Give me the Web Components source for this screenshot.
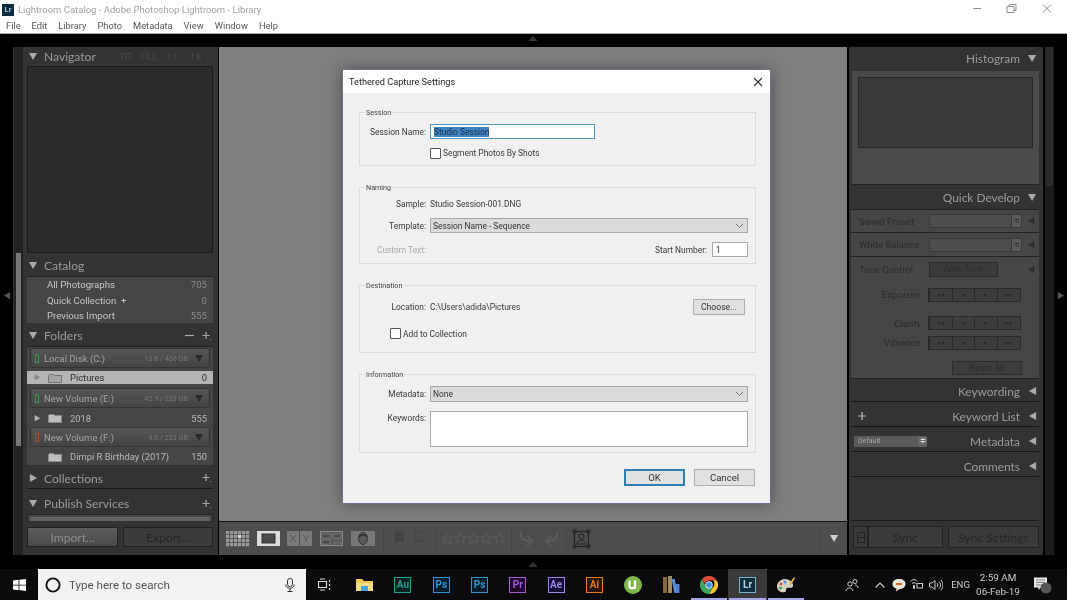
<!DOCTYPE html>
<html><head><meta charset="utf-8"><title>Lightroom</title>
<style>html,body{margin:0;padding:0;background:#000;overflow:hidden}</style></head>
<body><lr-app></lr-app>
<script>
const UI='Roboto,"Open Sans",sans-serif', PANEL='Lato,"Open Sans",sans-serif';
const tri=(d,c,s=9)=>{const p={down:'0,1 9,1 4.5,9',right:'1,0 9,4.5 1,9',left:'9,0 1,4.5 9,9'}[d];return `<svg width="${s}" height="${s}" viewBox="0 0 10 10" style="display:block;flex:none"><polygon points="${p}" fill="${c}"/></svg>`};
function def(name,css,html){customElements.define(name,class extends HTMLElement{connectedCallback(){if(this.shadowRoot)return;const a=n=>this.getAttribute(n)??'';const s=this.attachShadow({mode:'open'});s.innerHTML=`<style>${css}</style>`+(typeof html==='function'?html(a,this):html)}})}

/* ---------- window chrome ---------- */
def('win-titlebar',`:host{display:block;height:33px;background:#fff;border-bottom:1px solid #a9a9a9;box-sizing:content-box;font-family:${UI};position:relative}
.t{height:17px;display:flex;align-items:center;padding:1px 0 0 2px;gap:4px;font-size:9.5px;color:#a0a0a0}
.lr{width:12px;height:12px;background:#0f2c3d;color:#9cc8e6;font:bold 7.5px ${UI};display:flex;align-items:center;justify-content:center}
.m{display:flex;height:15px;align-items:center;padding-left:6px;gap:11px;font-size:9.3px;color:#555}
.c{position:absolute;top:0;right:0;display:flex}.c svg{display:block}`,
`<div class="t"><span class="lr">Lr</span><span>Lightroom Catalog - Adobe Photoshop Lightroom - Library</span></div>
<div class="m"><span>File</span><span>Edit</span><span>Library</span><span>Photo</span><span>Metadata</span><span>View</span><span>Window</span><span>Help</span></div>
<div class="c"><svg width="107" height="17" fill="none" stroke="#8d8d8d"><path d="M13 8.500h8"/><path d="M47 6.500h7v6h-7zM49 6.500v-2h7v6h-2"/><path d="M83 4.500l8 8M91 4.500l-8 8"/></svg></div>`);

def('lr-head',`:host{display:flex;align-items:center;box-sizing:border-box;font-family:${PANEL};color:#9b9b9b;font-size:12.1px;padding:0 7px 0 0;height:20px}
:host([side=right]){padding-right:6px;font-size:11.9px}
.l{display:flex;align-items:center;width:100%}.arrow{margin:0 6px 0 6px}.name{white-space:nowrap}
.sp{flex:1}.r{display:flex;align-items:center;gap:8px}
:host([side=right]) .name{margin:0 8px 0 0}`,
(a)=>a('side')==='right'
?`<div class="l"><slot name="lead"></slot><span class="sp"></span><span class="name">${a('label')}</span>${tri(a('arrow')||'left','#aaa',9)}</div>`
:`<div class="l"><span class="arrow">${tri(a('arrow')||'down','#aaa',9)}</span><span class="name">${a('label')}</span><span class="sp"></span><span class="r"><slot></slot></span></div>`);

def('lr-plus',`:host{display:block;color:#aaa;line-height:0}`,`<svg width="9" height="10" stroke="#aaa" stroke-width="1.2"><path d="M4 1v7M.5 4.500h7"/><path d="M8 8.500h1" stroke="#888"/></svg>`);

def('lr-count',`:host{display:flex;height:15.6px;align-items:center;justify-content:space-between;padding:0 6px 0 20px;font:9.6px ${UI};color:#c8c8c8}
b{font-weight:400;color:#8b8b8b}`,a=>`<span><slot></slot></span><b>${a('n')}</b>`);

def('lr-disk',`:host{display:flex;align-items:center;height:20px;box-sizing:border-box;margin:0 3px;padding:0 5px 0 4px;border-radius:2px;
background:linear-gradient(#565656,#444);border:1px solid #333;font:9.5px ${UI};color:#a6a6a6}
i{width:2px;height:7px;border:1px solid;margin-right:5px;box-sizing:content-box}
.s{flex:1}.g{font-size:7.2px;color:#777;margin-right:7px}`,
a=>`<i style="color:${a('c')}"></i><span>${a('label')}</span><span class="s"></span><span class="g">${a('gb')}</span>${tri('down','#2b2b2b',9)}`);

def('lr-folder',`:host{display:flex;align-items:center;box-sizing:border-box;padding:0 6px 0 7px;font:9.4px ${UI};color:#b9b9b9}
:host([sel]){background:#b5b5b5;color:#2a2a2a}.a{width:14px}.f{margin-right:8px;display:block}.s{flex:1}b{font-weight:400}`,
(a,t)=>{const sel=t.hasAttribute('sel');return `<span class="a">${a('arrow')?tri('right',sel?'#8a8a8a':'#b5b5b5',7):''}</span>
<svg class="f" width="14" height="10"><path d="M.5 9.500V2.500l1-1h4l1 1h7v7z" fill="${sel?'#a6a6a6':'#bdbdbd'}" stroke="${sel?'#777':'#8a8a8a'}"/></svg>
<span>${a('label')}</span><span class="s"></span><b>${a('n')}</b>`});

def('lr-btn',`:host{display:flex;align-items:center;justify-content:center;box-sizing:border-box;height:20px;padding-top:1px;font:12.1px ${PANEL};border:1px solid #222}`,`<slot></slot>`);

def('lr-left',`:host{display:block;width:195px;height:508px;background:#333;box-sizing:border-box}
.box{margin:0 5px 0 4px;box-sizing:border-box}
.nav{height:187px;background:#2b2b2b;border:1px solid #1a1a1a}
.dim{display:flex;gap:9px;font:8.2px ${UI};color:#4c4c4c;margin-right:10px}
.cat{height:47px;background:#454545;border-top:1px solid #222}
.fol{height:119px;background:#454545;border-top:1px solid #222;padding-top:1px}
.line{height:1px;background:#171717;margin:0 5px 4px 4px}
.pub{height:7px;background:#454545;border:1px solid #222;border-bottom:0;padding:2px 2px 0;overflow:hidden}.pub div{height:5px;background:#626262}
.bot{display:flex;gap:5px;margin:6px 5px 0 4px}`,
`<lr-head label="Navigator" style="height:19px"><span class="dim"><span>FIT</span><span>FILL</span><span>1:1</span><span style="margin-left:4px">1:8</span></span></lr-head>
<div class="box nav"></div>
<lr-head label="Catalog" style="height:21px;margin-top:2px"></lr-head>
<div class="box cat"><lr-count n="705">All Photographs</lr-count><lr-count n="0">Quick Collection&nbsp; +</lr-count><lr-count n="555">Previous Import</lr-count></div>
<lr-head label="Folders" style="height:21px;margin-top:2px"><svg width="9" height="3"><path d="M0 1.500h9" stroke="#aaa" stroke-width="1.2"/></svg><lr-plus></lr-plus></lr-head>
<div class="box fol">
<lr-disk label="Local Disk (C:)" gb="13.6 / 466 GB" c="#3d9440"></lr-disk>
<lr-folder label="Pictures" n="0" arrow="1" sel style="height:13px;margin:3px 0 4px"></lr-folder>
<lr-disk label="New Volume (E:)" gb="42.9 / 233 GB" c="#3d9440"></lr-disk>
<lr-folder label="2018" n="555" arrow="1" style="height:16px;margin:2px 0 1px"></lr-folder>
<lr-disk label="New Volume (F:)" gb="4.6 / 233 GB" c="#a0512f"></lr-disk>
<lr-folder label="Dimpi R Birthday (2017)" n="150" style="height:15px;margin-top:2px"></lr-folder>
</div>
<lr-head label="Collections" arrow="right" style="height:20px;margin-top:3px"><lr-plus></lr-plus></lr-head>
<div class="line"></div>
<lr-head label="Publish Services" style="height:21px"><lr-plus></lr-plus></lr-head>
<div class="box pub"><div></div></div>
<div class="bot"><lr-btn style="width:92px;background:linear-gradient(#5c5c5c,#4a4a4a);color:#8e8e8e">Import...</lr-btn><lr-btn style="width:91px;background:#3b3b3b;color:#262626">Export...</lr-btn></div>`);

/* ---------- filmstrip toolbar ---------- */
def('lr-toolbar',`:host{display:flex;align-items:center;height:33px;background:#4d4d4d;border-top:1px solid #151515;padding-left:7px;box-sizing:content-box}
svg{display:block;flex:none}.d{width:1px;height:24px;background:#444;flex:none}.s{flex:1}`,
()=>{let g='';for(let y=0;y<4;y++)for(let x=0;x<6;x++)g+=`<rect x="${x*4}" y="${y*4}" width="3.2" height="3.2" fill="${x==3&&y==1?'#ddd':'#9a9a9a'}"/>`;
let st='';for(let i=0;i<5;i++)st+=`<path transform="translate(${i*13})" d="M6.500 1l1.600 3.600 3.900.4-3 2.600.9 3.900-3.400-2-3.400 2 .9-3.900-3-2.600 3.900-.4z" fill="none" stroke="#5c5c5c"/>`;
return `<svg width="24" height="16">${g}</svg>
<svg style="margin-left:7px" width="23" height="15"><rect width="23" height="15" fill="#ddd"/><rect x="5" y="3" width="13" height="9" fill="#4a4a4a" stroke="#333"/></svg>
<svg style="margin-left:7px" width="25" height="15"><rect width="12" height="15" fill="#7a7a7a"/><rect x="13" width="12" height="15" fill="#7a7a7a"/><path d="M3 4l6 7M9 4l-6 7M16 4l3 4 3-4M19 8v3" stroke="#555" fill="none"/></svg>
<svg style="margin-left:8px" width="23" height="15"><rect x=".5" y=".5" width="22" height="14" fill="#5c5c5c" stroke="#8a8a8a"/><path d="M2 3h8v4H2zM13 3h8v4h-8zM2 9h8v4H2z" fill="#4a4a4a" stroke="#888" stroke-width=".7"/><path d="M14 12h1M17 12h1M20 12h1" stroke="#aaa"/></svg>
<svg style="margin-left:8px" width="24" height="15"><rect width="24" height="15" fill="#777"/><ellipse cx="12" cy="7.500" rx="4.500" ry="6" fill="#5a5a5a" stroke="#333"/><path d="M8 6c2-3 6-3 8 0" stroke="#2e2e2e" fill="none" stroke-width="1.500"/></svg>
<span class="d" style="margin-left:8px"></span>
<svg style="margin-left:10px" width="10" height="15"><path d="M1 15V1h9v9H2" fill="#424242" stroke="#424242"/></svg>
<svg style="margin-left:10px" width="10" height="15"><path d="M1 15V1h8v9H2" fill="none" stroke="#444"/></svg>
<span class="d" style="margin-left:11px"></span>
<svg style="margin-left:5px" width="65" height="13">${st}</svg>
<span class="d" style="margin-left:5px"></span>
<svg style="margin-left:7px" width="15" height="18" fill="none" stroke="#5f5f5f" stroke-width="1.500"><path d="M2 1c-1 6 1 10 9 10M8 6l5 5-5 5"/></svg>
<svg style="margin-left:10px" width="15" height="18" fill="none" stroke="#5f5f5f" stroke-width="1.500"><path d="M13 1c1 6-1 10-9 10M7 6l-5 5 5 5"/></svg>
<span class="d" style="margin-left:7px"></span>
<svg style="margin-left:5px" width="19" height="20" fill="none" stroke="#222"><rect x="2.500" y="2.500" width="14" height="15" stroke-width="1.2"/><circle cx="2.500" cy="2.500" r="1.800"/><circle cx="16.500" cy="2.500" r="1.800"/><circle cx="2.500" cy="17.500" r="1.800"/><circle cx="16.500" cy="17.500" r="1.800"/><circle cx="9.500" cy="7.500" r="2.600"/><path d="M5 15c0-5 9-5 9 0z"/></svg>
<span class="s"></span><span class="d"></span>
<span style="margin:0 8px 0 10px;display:block">${tri('down','#cfcfcf',9)}</span>`});

/* ---------- right panel ---------- */
def('qd-stepper',`:host{display:grid;grid-template-columns:23px 22px 23px 23px;width:91px;height:12px;background:#3d3d3d;border:1px solid #2a2a2a;box-sizing:content-box;font:6.5px ${UI};color:#2b2b2b;text-align:center;line-height:12px}
span{border-left:1px solid #2a2a2a}span:first-child{border:0}`,`<span>◂◂</span><span>◂</span><span>▸</span><span>▸▸</span>`);
def('qd-select',`:host{display:flex;width:91px;height:12px;background:#4d4d4d;border:1px solid #3a3a3a;justify-content:flex-end;box-sizing:content-box}
i{width:9px;background:#5a5a5a;border-left:1px solid #3a3a3a;font:normal 7px ${UI};color:#333;text-align:center;line-height:12px}`,`<i>≑</i>`);
def('qd-row',`:host{display:flex;align-items:center;box-sizing:border-box;font:9.5px ${UI};color:#2c2c2c;padding:0 4px 0 8px}
.l{width:70px;white-space:nowrap}:host([r]) .l{text-align:right;width:62px;margin-right:7px}`,
(a,t)=>`<span class="l">${a('label')}</span><slot></slot>${t.hasAttribute('arrow')?`<span style="margin-left:auto">${tri('left','#2f2f2f',8)}</span>`:''}`);
def('lr-right',`:host{display:block;width:194px;height:508px;background:#333;box-sizing:border-box;position:relative}
.hist{margin:1px 4px 2px 3px;height:114px;background:#4a4a4a;padding:6px;box-sizing:border-box;border-bottom:1px solid #222}
.hist div{height:71px;background:#3a3a3a;border:1px solid #262626;box-sizing:border-box}
.qd{margin:0 4px 0 2px;height:170px;background:#464646;border-top:1px solid #222;border-bottom:1px solid #222;box-sizing:border-box}
.line{height:1px;background:#161616;margin:0 4px 2px 2px}
.auto{width:67px;height:13px;background:#3b3b3b;border:1px solid #2c2c2c;font:8.8px ${UI};color:#2c2c2c;text-align:center;line-height:13px;box-sizing:content-box}
.reset{width:68px;height:12px;margin-left:101px;background:#3d3d3d;border:1px solid #2c2c2c;font:8.8px ${UI};color:#2c2c2c;text-align:center;line-height:12px}
.dsel{width:73px;height:11px;background:#5a5a5a;font:7px ${UI};color:#a5a5a5;display:flex;align-items:center;justify-content:space-between;padding-left:4px;margin-left:5px;border-radius:1px;box-sizing:border-box}
.dsel i{font:normal 7px ${UI};background:#6b6b6b;width:9px;text-align:center;color:#ddd}
.sp{height:41px;border-bottom:1px solid #1a1a1a;margin:0 4px 0 2px}
.bot{display:flex;margin:5px 4px 0 4px;gap:5px}`,
`<lr-head side="right" label="Histogram" arrow="down" style="height:23px"></lr-head>
<div class="hist"><div></div></div>
<lr-head side="right" label="Quick Develop" arrow="down" style="margin-top:-1px;height:23px"></lr-head>
<div class="qd">
<qd-row label="Saved Preset" arrow style="height:23px;border-bottom:1px solid #222"><qd-select></qd-select></qd-row>
<qd-row label="White Balance" arrow style="height:24px;border-bottom:1px solid #222"><qd-select></qd-select></qd-row>
<qd-row label="Tone Control" arrow style="height:25px"><span class="auto">Auto Tone</span></qd-row>
<qd-row r label="Exposure" style="height:25px"><qd-stepper></qd-stepper></qd-row>
<qd-row r label="Clarity" style="height:20px;margin-top:6px"><qd-stepper></qd-stepper></qd-row>
<qd-row r label="Vibrance" style="height:19px"><qd-stepper></qd-stepper></qd-row>
<div class="reset" style="margin-top:9px">Reset All</div>
</div>
<lr-head side="right" label="Keywording" style="height:22px;padding-top:2px"></lr-head><div class="line"></div>
<lr-head side="right" label="Keyword List" style="height:22px;padding-top:2px"><svg slot="lead" style="margin-left:8px;display:block" width="10" height="10" stroke="#bbb" stroke-width="1.2"><path d="M5 1v8M1 5h8"/></svg></lr-head><div class="line"></div>
<lr-head side="right" label="Metadata" style="height:22px;padding-top:2px"><span slot="lead" class="dsel">Default<i>≑</i></span></lr-head><div class="line"></div>
<lr-head side="right" label="Comments" style="height:22px;padding-top:2px"></lr-head><div class="line"></div>
<div class="sp"></div>
<div class="bot"><lr-btn style="width:15px;background:#3a3a3a;height:22px;padding:0"><svg width="8" height="11" fill="none" stroke="#222"><path d="M.5.5h7v10h-7zM.5 5.500h7"/></svg></lr-btn><lr-btn style="width:75px;height:22px;background:#3b3b3b;color:#262626;margin-left:-5px">Sync</lr-btn><lr-btn style="width:91px;height:22px;background:#3b3b3b;color:#262626">Sync Settings</lr-btn></div>`);

/* ---------- dialog ---------- */
def('dlg-group',`:host{display:block;margin-bottom:16px}
fieldset{margin:0;border:1px solid #dcdcdc;padding:0 7px 0 0;box-sizing:border-box;height:var(--h);min-width:0}
legend{margin-left:5px;padding:0 1px;font:7.2px/11px ${UI};color:#444}`,
a=>`<fieldset style="--h:${a('h')}px"><legend>${a('label')}</legend><slot></slot></fieldset>`);
def('dlg-row',`:host{display:grid;grid-template-columns:66px 1fr;column-gap:4px;align-items:center;font:8.4px ${UI};color:#3a3a3a}
.k{text-align:right;white-space:nowrap}:host([dis]) .k{color:#a8a8a8}:host([top]) .k{margin-top:2px}`,a=>`<span class="k">${a('label')}</span><div style="min-width:0"><slot></slot></div>`);
def('dlg-check',`:host{display:flex;align-items:center;gap:2px;font:8.4px ${UI};color:#3a3a3a}
i{width:9px;height:9px;border:1px solid #555;background:#fff;border-radius:1px;box-sizing:content-box}`,`<i></i><span><slot></slot></span>`);
def('dlg-select',`:host{display:flex;align-items:center;justify-content:space-between;box-sizing:border-box;background:#dcdcdc;border:1px solid #a8a8a8;padding:0 3px 0 2px;font:8.4px ${UI};color:#333}
svg{display:block}`,`<span><slot></slot></span><svg width="9" height="6" fill="none" stroke="#777"><path d="M1 1l3.500 3.500L8 1"/></svg>`);
def('dlg-btn',`:host{display:flex;align-items:center;justify-content:center;box-sizing:border-box;background:#e1e1e1;border:1px solid #adadad;font:9.6px ${UI};color:#333}
:host([def]){border:2px solid #2d7eb3}`,`<slot></slot>`);
def('dlg-dialog',`:host{position:absolute;left:342px;top:69px;width:429px;height:435px;background:#f0f0f0;box-sizing:border-box;border:1px solid #6d7186;box-shadow:0 0 14px rgba(20,20,30,.45);font-family:${UI}}
.head{height:23px;background:#fff;display:flex;align-items:center;justify-content:space-between;padding:0 7px 0 6px;font-size:9.2px;color:#222}
.body{padding:14px 14px 0 16px}
.input{background:#fff;border:1px solid #a8a8a8;box-sizing:border-box;font-size:8.4px;color:#333;display:flex;align-items:center;padding-left:3px}
.sel{background:#3f86c6;color:#1c2c3c}
.foot{display:flex;justify-content:flex-end;gap:9px;margin:2px 1px 0 0}
.rowb{display:flex;justify-content:space-between;align-items:center}`,
`<div class="head"><span>Tethered Capture Settings</span><svg width="10" height="10" fill="none" stroke="#333" stroke-width="1.1"><path d="M1 1l8 8M9 1L1 9"/></svg></div>
<div class="body">
<dlg-group label="Session" h="59">
 <dlg-row label="Session Name:" style="margin-top:6px;height:15px"><div class="input" style="width:165px;height:15px;border-color:#4f97c9"><span class="sel">Studio Session</span></div></dlg-row>
 <dlg-row style="margin-top:8px;height:12px"><dlg-check>Segment Photos By Shots</dlg-check></dlg-row>
</dlg-group>
<dlg-group label="Naming" h="82">
 <dlg-row label="Sample:" style="margin-top:4px;height:14px">Studio Session-001.DNG</dlg-row>
 <dlg-row label="Template:" style="margin-top:7px;height:15px"><dlg-select style="height:15px">Session Name - Sequence</dlg-select></dlg-row>
 <dlg-row label="Custom Text:" dis style="margin-top:9px;height:15px"><div class="rowb"><span></span><span style="display:flex;align-items:center;gap:5px">Start Number:<div class="input" style="width:36px;height:15px">1</div></span></div></dlg-row>
</dlg-group>
<dlg-group label="Destination" h="73">
 <dlg-row label="Location:" style="margin-top:8px;height:16px"><div class="rowb" style="padding-right:3px"><span>C:\\Users\\adida\\Pictures</span><dlg-btn style="width:52px;height:16px;font-size:8.6px">Choose...</dlg-btn></div></dlg-row>
 <dlg-check style="margin:13px 0 0 30px;height:11px">Add to Collection</dlg-check>
</dlg-group>
<dlg-group label="Information" h="84">
 <dlg-row label="Metadata:" style="margin-top:6px;height:16px"><dlg-select style="height:16px">None</dlg-select></dlg-row>
 <dlg-row top label="Keywords:" style="margin-top:9px;height:36px;align-items:start"><div class="input" style="height:36px"></div></dlg-row>
</dlg-group>
<div class="foot"><dlg-btn def style="width:61px;height:17px">OK</dlg-btn><dlg-btn style="width:61px;height:17px">Cancel</dlg-btn></div>
</div>`);

/* ---------- taskbar ---------- */
def('tb-slot',`:host{display:flex;align-items:center;justify-content:center;width:38.3px;height:31px;flex:none;box-sizing:border-box;position:relative}
:host([on]):after{content:"";position:absolute;left:1px;right:1px;bottom:0;height:2px;background:#a6a6e6}
:host([act]){background:#3a3a3a}`,`<slot></slot>`);
def('tb-tile',`:host{display:flex;align-items:center;justify-content:center;width:17px;height:16px;box-sizing:border-box;border:1px solid var(--c);background:var(--b);color:var(--c);font:bold 10px Roboto,sans-serif}`,`<slot></slot>`);
def('win-taskbar',`:host{display:flex;height:31px;background:#0b0b0d;font-family:${UI};color:#ddd}
.start{width:38px;display:flex;align-items:center;justify-content:center}
.search{width:268px;background:#f2f2f2;display:flex;align-items:center;padding-left:7px;box-sizing:border-box;color:#555;font-size:11.6px}
.search span{flex:1;margin-left:8px}.search svg{display:block}
.tray{margin-left:auto;display:flex;align-items:center;height:31px}
.tray svg{display:block;flex:none}.tray span{font-size:9.6px;color:#ccc}
.clock{text-align:center;line-height:13.5px;width:54px;font-size:9.9px;color:#ccc}`,
`<div class="start"><svg width="13" height="12" fill="#fff"><path d="M0 1.600l5.600-.8v4.900H0zM6.400.7L13 0v5.700H6.400zM0 6.400h5.600v4.800L0 10.400zM6.400 6.400H13V12l-6.600-.9z"/></svg></div>
<div class="search"><svg width="16" height="16" fill="none" stroke="#111" stroke-width="1.900"><circle cx="8" cy="8" r="6.600"/></svg><span>Type here to search</span><svg style="margin-right:11px" width="10" height="14" fill="none" stroke="#333"><rect x="2.500" y=".5" width="5" height="8" rx="2.200"/><path d="M.7 6.500c0 5 8.600 5 8.600 0M5 11v2.500M2.500 13.500h5"/></svg></div>
<tb-slot style="width:36px"><svg width="13" height="13" fill="none" stroke="#ddd" stroke-width="1.2"><path d="M.5 3.500h8v6h-8zM2 1h5M2 12h5M11.500 2v2M11.500 6v2M11.500 10v2"/></svg></tb-slot>
<span style="width:3.500px;flex:none"></span>
<tb-slot><svg width="17" height="15"><path d="M0 2h6l2 2h9v10H0z" fill="#f2c94c"/><path d="M0 6h17v8H0z" fill="#f7dc86"/><path d="M5 9h7v5H5z" fill="#4aa3df"/></svg></tb-slot>
<tb-slot><tb-tile style="--c:#1fa08f;--b:#06201f">Au</tb-tile></tb-slot>
<tb-slot><tb-tile style="--c:#2f93d6;--b:#061b2c">Ps</tb-tile></tb-slot>
<tb-slot><tb-tile style="--c:#2f93c6;--b:#061b2c">Ps</tb-tile></tb-slot>
<tb-slot><tb-tile style="--c:#a45bd6;--b:#21072c">Pr</tb-tile></tb-slot>
<tb-slot><tb-tile style="--c:#9e85ea;--b:#170a34">Ae</tb-tile></tb-slot>
<tb-slot><tb-tile style="--c:#e07a1e;--b:#2c1403">Ai</tb-tile></tb-slot>
<tb-slot><svg width="18" height="18"><circle cx="9" cy="9" r="9" fill="#7fb84a"/><path d="M5.500 4.500v5.500c0 3 5 3 5.500 0V4.500M11 4.500v8.500" fill="none" stroke="#fff" stroke-width="2.200"/></svg></tb-slot>
<tb-slot><svg width="17" height="17"><rect x="0" y="1" width="4" height="16" fill="#8a6a3a"/><rect x="5" y="0" width="4" height="17" fill="#a58a5a"/><rect x="10" y="3" width="3" height="14" fill="#5f8fd0" transform="rotate(-10 11 10)"/><rect x="13" y="8" width="3.500" height="9" fill="#4f7fd8"/></svg></tb-slot>
<tb-slot on><svg width="18" height="18" viewBox="0 0 18 18"><path d="M9 0a9 9 0 0 1 7.800 4.500H9a4.500 4.500 0 0 0-4.200 3L2 3.200A9 9 0 0 1 9 0z" fill="#dd4b3e"/><path d="M16.800 4.500A9 9 0 0 1 9 18l3.900-6.700a4.500 4.500 0 0 0 0-6.800z" fill="#f4c430"/><path d="M9 18A9 9 0 0 1 2 3.200l3.900 6.700a4.500 4.500 0 0 0 7 1.400L9 18z" fill="#3ba55c"/><circle cx="9" cy="9" r="3.400" fill="#4a90e2" stroke="#fff" stroke-width=".8"/></svg></tb-slot>
<tb-slot on act><tb-tile style="--c:#7ab0d0;--b:#0f2c3d;color:#b8d4e6">Lr</tb-tile></tb-slot>
<tb-slot on><svg width="20" height="18"><path d="M9 3C4 3 1 7 1 10.500C1 15 6 17 9 16c2-.7 0-3 2-4 2-1 5 1 6-2 .7-3-3-7-8-7z" fill="#d8d2c4"/><circle cx="5" cy="8" r="1.500" fill="#d94f3d"/><circle cx="9" cy="6" r="1.500" fill="#4a90e2"/><circle cx="4.500" cy="12" r="1.500" fill="#3ba55c"/><path d="M13 8l5-7 1 1-4 7z" fill="#e8b23c"/></svg></tb-slot>
<div class="tray">
<svg width="14" height="14" fill="none" stroke="#ccc"><circle cx="5" cy="6" r="2.200"/><path d="M1 13c0-4 7-4 7 0"/><circle cx="10" cy="3.500" r="2"/><path d="M10 7c2 0 3 1.500 3 3"/></svg>
<svg style="margin-left:16px" width="10" height="6" fill="none" stroke="#ccc" stroke-width="1.100"><path d="M.5 5.500L5 1l4.500 4.500"/></svg>
<svg style="margin-left:7px" width="14" height="14"><path d="M7 1c4 0 6.500 2 6.500 5s-3 5-6 5L4 13.500 4.500 10.500C2 10 .5 8.500.5 6 .5 3 3 1 7 1z" fill="#f1e6da"/><path d="M4 6h6" stroke="#d9662a" stroke-width="2"/></svg>
<svg style="margin-left:4px" width="13" height="11" fill="none" stroke="#ccc"><path d="M.5 2.500c2-2.500 5-2.500 7 0M2 4.500c1-1 3-1 4 0M3.500 6.500h1v3h-1z"/><rect x="7" y="4.500" width="5.500" height="4.500"/></svg>
<svg style="margin-left:6px" width="14" height="12" fill="none" stroke="#ccc"><path d="M.5 4h2.500L6 1.500v9L3 8H.5zM8 4c1 1 1 3 0 4M10 2.500c2 2 2 5 0 7M12 1c2.500 3 2.500 7 0 10"/></svg>
<span style="margin-left:8px">ENG</span>
<div class="clock" style="margin-left:1px">2:59 AM<br>06-Feb-19</div>
<svg style="margin:0 15px 0 8px" width="19" height="18"><path d="M1 1.500h13v10H8l-2.500 2.500V11.500H1z" fill="#e8e8e8"/><path d="M3 4h9M3 6.500h9M3 9h6" stroke="#777"/><circle cx="13" cy="12" r="5.500" fill="#555"/></svg>
</div>`);

/* ---------- app ---------- */
def('lr-app',`:host{display:block;width:1067px;height:600px;position:relative;overflow:hidden;background:#000;filter:blur(.4px)}
.work{display:flex;height:535px;box-sizing:border-box;padding-top:13px;background:#000;position:relative}
.edge{width:13px;display:flex;align-items:center;justify-content:center;height:508px;padding-bottom:10px;box-sizing:border-box;flex:none}
.strip{width:10px;height:508px;background:#222;box-sizing:border-box;border-left:1px solid #333;padding:206px 2px 0 2px;flex:none}
.strip div{height:193px;background:#777}
.strip.r{padding:0 1px 0 1px;border-left:1px solid #000;background:#1c1c1c}.strip.r div{height:139px;background:#2c2c2c}
.center{width:629px;margin:0 2px 0 1px;height:508px;display:flex;flex-direction:column}
.stage{flex:1;background:#7f7f7f}
.grip{position:absolute;left:528px;display:block}`,
`<win-titlebar></win-titlebar>
<div class="work">
<svg class="grip" style="top:2px" width="10" height="6" fill="#333"><path d="M5 0l4 4H1zM1 4h8v1H1z"/></svg>
<div class="edge">${tri('left','#555',8)}</div>
<div class="strip"><div></div></div>
<lr-left></lr-left>
<div class="center"><div class="stage"></div><lr-toolbar></lr-toolbar></div>
<lr-right></lr-right>
<div class="strip r" style="margin-left:1px"><div></div></div>
<div class="edge">${tri('right','#555',8)}</div>
<svg class="grip" style="top:528px" width="10" height="6" fill="#333"><path d="M5 0l4 4H1zM1 4h8v1H1z"/></svg>
</div>
<win-taskbar></win-taskbar>
<dlg-dialog></dlg-dialog>`);
</script></body></html>
